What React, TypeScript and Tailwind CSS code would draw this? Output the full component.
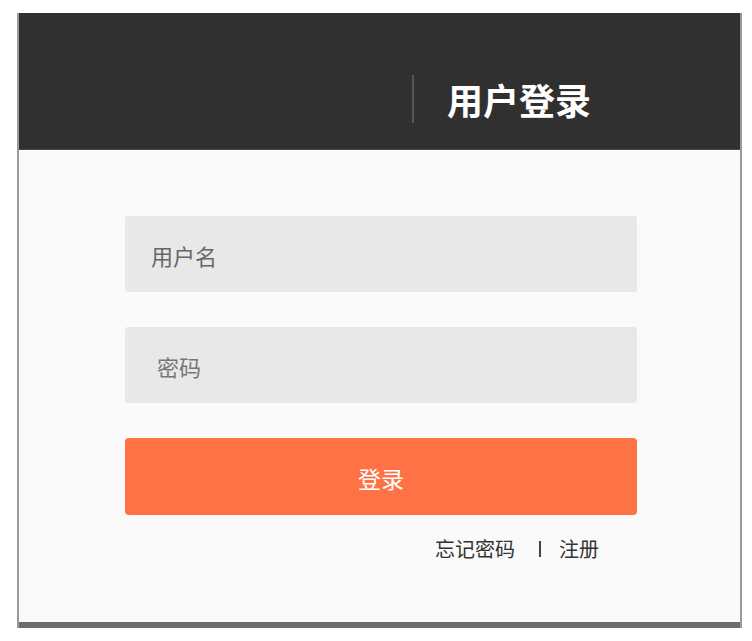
const font = { fontFamily: '"Noto Sans CJK SC", "Noto Sans", sans-serif' };

const App = () => {
  return (
    <div className="min-h-[641px] w-[752px] bg-white pt-[13px] pl-[17px]" style={font}>
      <div className="w-[725px] border-x-2 border-[#9a9a9a]">
        <div className="h-[137px] bg-[#303030] border-b border-[#4a4a4a] flex items-center pt-[35px] pl-[393px]">
          <div className="w-[2px] h-[48px] bg-[#555555]" />
          <h1 className="ml-[33px] text-[36px] font-bold text-white leading-none">
            用户登录
          </h1>
        </div>
        <div className="h-[478px] bg-[#fafafa] border-b-[6px] border-[#6c6c6c] pt-[66px] pl-[106px]">
          <div className="w-[512px] flex flex-col">
            <div className="h-[76px] rounded-[3px] bg-[#e8e8e8] flex items-center pl-[26px] pt-[2px] text-[22px] text-[#666666]">
              用户名
            </div>
            <div className="mt-[35px] h-[76px] rounded-[3px] bg-[#e8e8e8] flex items-center pl-[32px] pt-[2px] text-[22px] text-[#777777]">
              密码
            </div>
            <button className="mt-[35px] h-[77px] rounded-[4px] bg-[#fe7245] text-white text-[23px] flex items-center justify-center pt-[4px]">
              登录
            </button>
            <div className="mt-[19px] flex justify-end items-center pr-[38px] text-[20px] text-[#333333]">
              <span>忘记密码</span>
              <span className="ml-[24px] mr-[18px] w-[2px] h-[16px] bg-[#444444]" />
              <span>注册</span>
            </div>
          </div>
        </div>
      </div>
    </div>
  );
};

export default App;
